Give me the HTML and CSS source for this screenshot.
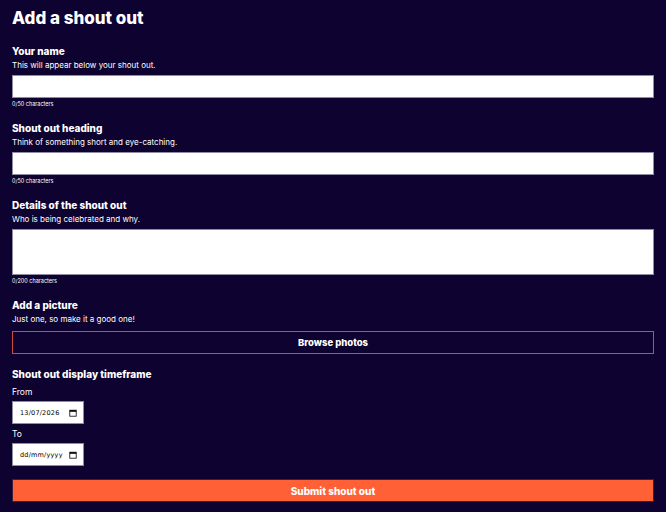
FILE: index.html
```html
<!DOCTYPE html>
<html lang="en-GB">
<head>
    <meta charset="UTF-8">
    <meta name="viewport" content="width=device-width, initial-scale=1.0">
    <title>Add a shout out</title>
    <link rel="stylesheet" href="styles.css">
</head>
<body>
    <h1 class="page-title">Add a shout out</h1>

    <form class="shout-form">
        <div class="field">
            <label class="field-label" for="name">Your name</label>
            <div class="field-hint">This will appear below your shout out.</div>
            <input type="text" id="name" class="text-input" maxlength="50">
            <div class="char-count">0/50 characters</div>
        </div>

        <div class="field">
            <label class="field-label" for="heading">Shout out heading</label>
            <div class="field-hint">Think of something short and eye-catching.</div>
            <input type="text" id="heading" class="text-input" maxlength="50">
            <div class="char-count">0/50 characters</div>
        </div>

        <div class="field">
            <label class="field-label" for="details">Details of the shout out</label>
            <div class="field-hint">Who is being celebrated and why.</div>
            <textarea id="details" class="text-input text-area" maxlength="200"></textarea>
            <div class="char-count">0/200 characters</div>
        </div>

        <div class="field">
            <div class="field-label">Add a picture</div>
            <div class="field-hint">Just one, so make it a good one!</div>
            <button type="button" class="browse-button">Browse photos</button>
        </div>

        <div class="field timeframe">
            <div class="field-label">Shout out display timeframe</div>

            <label class="date-label" for="from">From</label>
            <div class="date-box">
                <input type="text" id="from" class="date-input" value="13/07/2026" placeholder="dd/mm/yyyy">
                <svg class="date-icon" viewBox="0 0 10 10" aria-hidden="true">
                    <rect x="1" y="1.5" width="8" height="7.5" fill="none" stroke="#000" stroke-width="1"/>
                    <rect x="1" y="1.5" width="8" height="2" fill="#000"/>
                </svg>
            </div>

            <label class="date-label" for="to">To</label>
            <div class="date-box">
                <input type="text" id="to" class="date-input" placeholder="dd/mm/yyyy">
                <svg class="date-icon" viewBox="0 0 10 10" aria-hidden="true">
                    <rect x="1" y="1.5" width="8" height="7.5" fill="none" stroke="#000" stroke-width="1"/>
                    <rect x="1" y="1.5" width="8" height="2" fill="#000"/>
                </svg>
            </div>
        </div>

        <button type="submit" class="submit-button">Submit shout out</button>
    </form>
</body>
</html>
```

FILE: styles.css
```css
body {
    font-family: Inter, Lato, sans-serif;
    margin: 0;
    padding: 6px 12px 10px;
    background-color: #0d0230;
    color: #ffffff;
}

.page-title {
    font-size: 17px;
    line-height: 24px;
    font-weight: 800;
    margin: 0 0 14px;
}

.shout-form {
    display: flex;
    flex-direction: column;
}

.field {
    display: flex;
    flex-direction: column;
    margin-bottom: 13px;
}

.field-label {
    font-size: 10px;
    line-height: 14px;
    font-weight: 800;
}

.field-hint {
    font-size: 8px;
    line-height: 12px;
    margin-top: 1px;
}

.text-input {
    height: 23px;
    box-sizing: border-box;
    border: 1px solid #8f8ba6;
    background-color: #ffffff;
    padding: 2px 6px;
    font-family: inherit;
    font-size: 10px;
    margin: 4px 0 0;
}

.text-area {
    height: 46px;
    resize: none;
}

.char-count {
    font-size: 5.5px;
    line-height: 8px;
    margin-top: 2px;
}

.browse-button {
    margin-top: 6px;
    height: 23px;
    border: 1px solid #d04b3b;
    background: transparent;
    color: #ffffff;
    font-family: inherit;
    font-size: 9.5px;
    font-weight: 800;
    cursor: pointer;
}

.date-label {
    font-size: 8.5px;
    line-height: 12px;
    margin-top: 5px;
}

.date-label + .date-box {
    margin-top: 3px;
}

.timeframe .date-box + .date-label {
    margin-top: 4px;
}

/* white box holding the date text and the calendar glyph */
.date-box {
    width: 72px;
    height: 23px;
    box-sizing: border-box;
    border: 1px solid #8f8ba6;
    background-color: #ffffff;
    display: flex;
    align-items: center;
    padding: 0 6px 0 7px;
    gap: 3px;
}

.date-input {
    flex: 1;
    min-width: 0;
    border: none;
    padding: 0;
    margin: 0;
    font-family: "DejaVu Sans", sans-serif;
    font-size: 6.5px;
    letter-spacing: 0.2px;
    color: #000;
    background: transparent;
    outline: none;
}

.date-input::placeholder {
    color: #000;
}

.date-icon {
    width: 8px;
    height: 8px;
    flex: none;
}

.submit-button {
    height: 23px;
    border: 1px solid #3b1f43;
    background-color: #ff6035;
    color: #ffffff;
    font-family: inherit;
    font-size: 10px;
    font-weight: 800;
    cursor: pointer;
}
```
